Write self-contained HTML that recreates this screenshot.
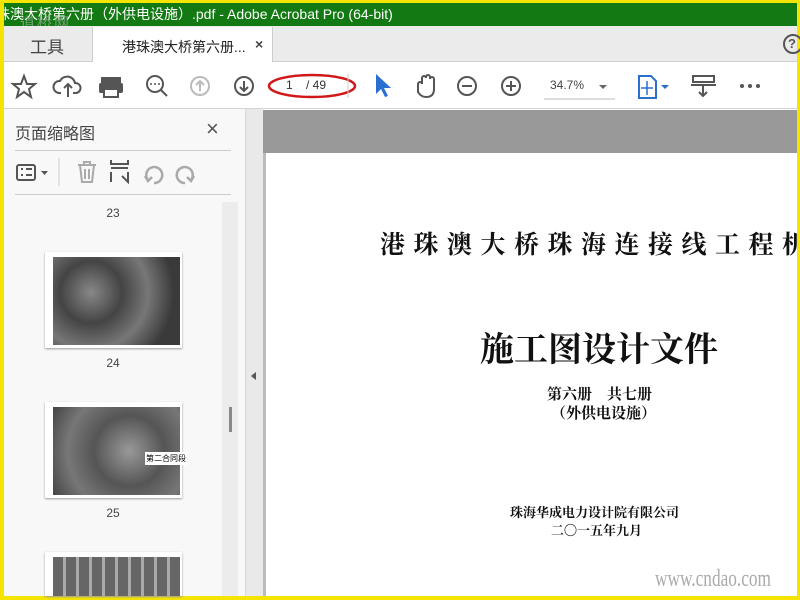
<!DOCTYPE html>
<html style="overflow:hidden;width:800px;height:600px"><head><meta charset="utf-8">
<style>
*{margin:0;padding:0;box-sizing:border-box}
body{width:800px;height:600px;overflow:hidden;background:#f5e400;position:relative;font-family:"Liberation Sans","Noto Sans CJK SC",sans-serif}
.a{position:absolute}
.title{left:4px;top:3px;width:793px;height:23px;background:#137a13;color:#fff;font-size:14px;line-height:23px;white-space:nowrap;overflow:hidden}
.tabs{left:4px;top:26px;width:793px;height:36px;background:#ebebeb;border-bottom:1px solid #cfcfcf}
.tb{left:4px;top:62px;width:793px;height:47px;background:#fff;border-bottom:1px solid #d4d4d4}
.ic{stroke:#555;fill:none;stroke-width:2}
.side{left:4px;top:109px;width:241px;height:487px;background:#f8f8f8}
.split{left:245px;top:109px;width:18px;height:487px;background:#e9e9e9;border-left:1px solid #d8d8d8}
.doc{left:263px;top:109px;width:534px;height:487px;background:#fff}
.thumb{left:45px;width:137px;height:96px;background:#fff;box-shadow:0 1px 2px #999;padding:5px 2px 3px 8px}
.thumb div{width:100%;height:100%;background:radial-gradient(circle at 30% 40%,#888,#444 30%,#777 55%,#3a3a3a 80%),#555}
.num{width:218px;text-align:center;font-size:12px;color:#444}
.serif{font-family:"Liberation Serif","Noto Serif CJK SC",serif;color:#111;white-space:nowrap}
</style></head><body>
<div class="a title"><span style="margin-left:-8px">珠澳大桥第六册（外供电设施）.pdf - Adobe Acrobat Pro (64-bit)</span></div>
<div class="a" style="left:20px;top:12px;color:#9ab09a;font-size:15px;letter-spacing:2px;opacity:.7">道桥网</div>
<div class="a tabs"></div>
<div class="a" style="left:30px;top:33px;font-size:17px;color:#444">工具</div>
<div class="a" style="left:92px;top:27px;width:181px;height:36px;background:#fff;border-left:1px solid #ccc;border-right:1px solid #ccc"></div>
<div class="a" style="left:122px;top:37px;font-size:14px;color:#222">港珠澳大桥第六册...</div>
<div class="a" style="left:255px;top:36px;font-size:14px;color:#444;font-weight:bold">×</div>
<div class="a" style="left:783px;top:34px;width:20px;height:20px;border:2px solid #555;border-radius:50%;font-size:13px;color:#555;padding-left:3px;line-height:16px;font-weight:bold">?</div>
<div class="a tb"></div>
<svg class="a" style="left:0;top:62px" width="800" height="47">
<polygon class="ic" points="24,14 27,22 35,22 29,27 31,35 24,30 17,35 19,27 13,22 21,22"/>
<path class="ic" d="M61,31 h-2 a6,6 0 0 1 1,-12 a8,8 0 0 1 15,2 a5,5 0 0 1 1,10 h-3 M68,35 v-13 M64,26 l4,-4 4,4"/>
<rect x="101" y="15" width="20" height="6" fill="#555"/><rect x="99" y="21" width="24" height="10" rx="2" fill="#555"/><rect x="104" y="27" width="14" height="8" fill="#fff" stroke="#555" stroke-width="2"/>
<circle class="ic" cx="155" cy="22" r="8"/><path class="ic" d="M161,28 l6,6" stroke-width="3"/><circle cx="151" cy="22" r="1" fill="#555"/><circle cx="155" cy="22" r="1" fill="#555"/><circle cx="159" cy="22" r="1" fill="#555"/>
<circle cx="200" cy="24" r="9" stroke="#bbb" stroke-width="2" fill="none"/><path d="M200,29 v-10 M196,23 l4,-4 4,4" stroke="#bbb" stroke-width="2" fill="none"/>
<circle class="ic" cx="244" cy="24" r="9"/><path class="ic" d="M244,19 v10 M240,25 l4,4 4,-4"/>
<ellipse cx="312" cy="24" rx="43" ry="11" fill="none" stroke="#d01818" stroke-width="2.5"/>
<line x1="348" y1="12" x2="348" y2="36" stroke="#ccc"/>
<path d="M376,12 v20 l5,-5 4,8 3,-1 -4,-8 7,0z" fill="#2a6fd0"/>
<path class="ic" d="M418,30 v-8 a2,2 0 0 1 4,0 v-6 a2,2 0 0 1 4,0 v-1 a2,2 0 0 1 4,0 v2 a2,2 0 0 1 4,0 v10 q0,8 -8,8 q-5,0 -8,-5z"/>
<circle class="ic" cx="467" cy="24" r="9"/><path class="ic" d="M462,24 h10"/>
<circle class="ic" cx="511" cy="24" r="9"/><path class="ic" d="M506,24 h10 M511,19 v10"/>
<line x1="544" y1="37" x2="615" y2="37" stroke="#bbb"/>
<path d="M599,23 h8 l-4,4z" fill="#666"/>
<path d="M639,14 h12 l5,5 v17 h-17z" fill="none" stroke="#2a6fd0" stroke-width="2"/><path d="M647,19 v14 M641,26 h12" stroke="#2a6fd0" stroke-width="1.5"/>
<path d="M661,23 h8 l-4,4z" fill="#2a6fd0"/>
<rect x="693" y="14" width="21" height="6" fill="none" stroke="#555" stroke-width="2"/><path class="ic" d="M691,23 h25 M703,23 v11 M699,30 l4,4 4,-4"/>
<circle cx="742" cy="24" r="2" fill="#555"/><circle cx="750" cy="24" r="2" fill="#555"/><circle cx="758" cy="24" r="2" fill="#555"/>
</svg>
<div class="a" style="left:286px;top:78px;font-size:12px;color:#333">1</div>
<div class="a" style="left:306px;top:78px;font-size:12px;color:#333">/ 49</div>
<div class="a" style="left:550px;top:78px;font-size:12px;color:#444">34.7%</div>

<div class="a side"></div>
<div class="a" style="left:15px;top:120px;font-size:16px;color:#444">页面缩略图</div>
<div class="a" style="left:206px;top:116px;font-size:22px;color:#555">×</div>
<div class="a" style="left:15px;top:150px;width:216px;height:1px;background:#ccc"></div>
<div class="a" style="left:15px;top:194px;width:216px;height:1px;background:#ccc"></div>
<svg class="a" style="left:0;top:150px" width="245" height="44">
<rect x="17" y="15" width="18" height="15" rx="2" fill="none" stroke="#555" stroke-width="2"/><path d="M21,19h2M26,19h6M21,25h2M26,25h6" stroke="#555" stroke-width="2"/>
<path d="M41,21 h7 l-3.5,4z" fill="#555"/>
<line x1="59" y1="8" x2="59" y2="36" stroke="#ccc"/>
<path d="M78,15 h18 M84,15 v-3 h6 v3 M80,15 l2,17 h10 l2,-17 M85,19v10M89,19v10" stroke="#aaa" stroke-width="2" fill="none"/>
<path d="M111,10 v4 h17 v-4 M111,18 h17 M111,22 v10 M128,22 v10 l-6,-6" stroke="#555" stroke-width="2" fill="none"/>
<path d="M148,30 a8,8 0 1 1 6,3 M145,26 l3,5 4,-4" stroke="#aaa" stroke-width="2.5" fill="none"/>
<path d="M191,30 a8,8 0 1 0 -6,3 M194,26 l-3,5 -4,-4" stroke="#aaa" stroke-width="2.5" fill="none"/>
</svg>
<div class="a" style="left:222px;top:202px;width:16px;height:394px;background:#ececec"></div>
<div class="a" style="left:229px;top:407px;width:3px;height:25px;background:#888"></div>
<div class="a num" style="left:4px;top:206px">23</div>
<div class="a thumb" style="top:252px"><div></div></div>
<div class="a num" style="left:4px;top:356px">24</div>
<div class="a thumb" style="top:402px"><div style="background:radial-gradient(circle at 60% 50%,#999,#555 40%,#777 70%,#444)"></div></div>
<div class="a" style="left:145px;top:452px;background:#fff;font-size:8px;padding:1px;color:#000">第二合同段</div>
<div class="a num" style="left:4px;top:506px">25</div>
<div class="a thumb" style="top:552px;height:44px;padding-bottom:0"><div style="background:repeating-linear-gradient(90deg,#666 0 10px,#aaa 10px 13px),#777"></div></div>

<div class="a split"></div>
<div class="a" style="left:251px;top:372px;width:0;height:0;border-top:4px solid transparent;border-bottom:4px solid transparent;border-right:5px solid #555"></div>
<div class="a doc"></div>
<div class="a" style="left:263px;top:110px;width:534px;height:43px;background:#999"></div>
<div class="a" style="left:263px;top:153px;width:3px;height:443px;background:#bbb"></div>
<div class="a serif" style="left:380px;top:225px;font-size:25px;font-weight:bold;letter-spacing:8.5px;width:417px;overflow:hidden">港珠澳大桥珠海连接线工程机电工程</div>
<div class="a serif" style="left:480px;top:322px;font-size:34px;font-weight:bold">施工图设计文件</div>
<div class="a serif" style="left:547px;top:383px;font-size:15px;font-weight:bold">第六册　共七册</div>
<div class="a serif" style="left:551px;top:402px;font-size:15px;font-weight:bold">（外供电设施）</div>
<div class="a serif" style="left:510px;top:502px;font-size:13px;font-weight:bold">珠海华成电力设计院有限公司</div>
<div class="a serif" style="left:551px;top:520px;font-size:13px;font-weight:bold">二〇一五年九月</div>
<div class="a" style="left:655px;top:566px;font-size:24px;color:#aaa;font-family:'Liberation Serif',serif;transform:scaleX(0.72);transform-origin:left top;white-space:nowrap">www.cndao.com</div>
</body></html>
